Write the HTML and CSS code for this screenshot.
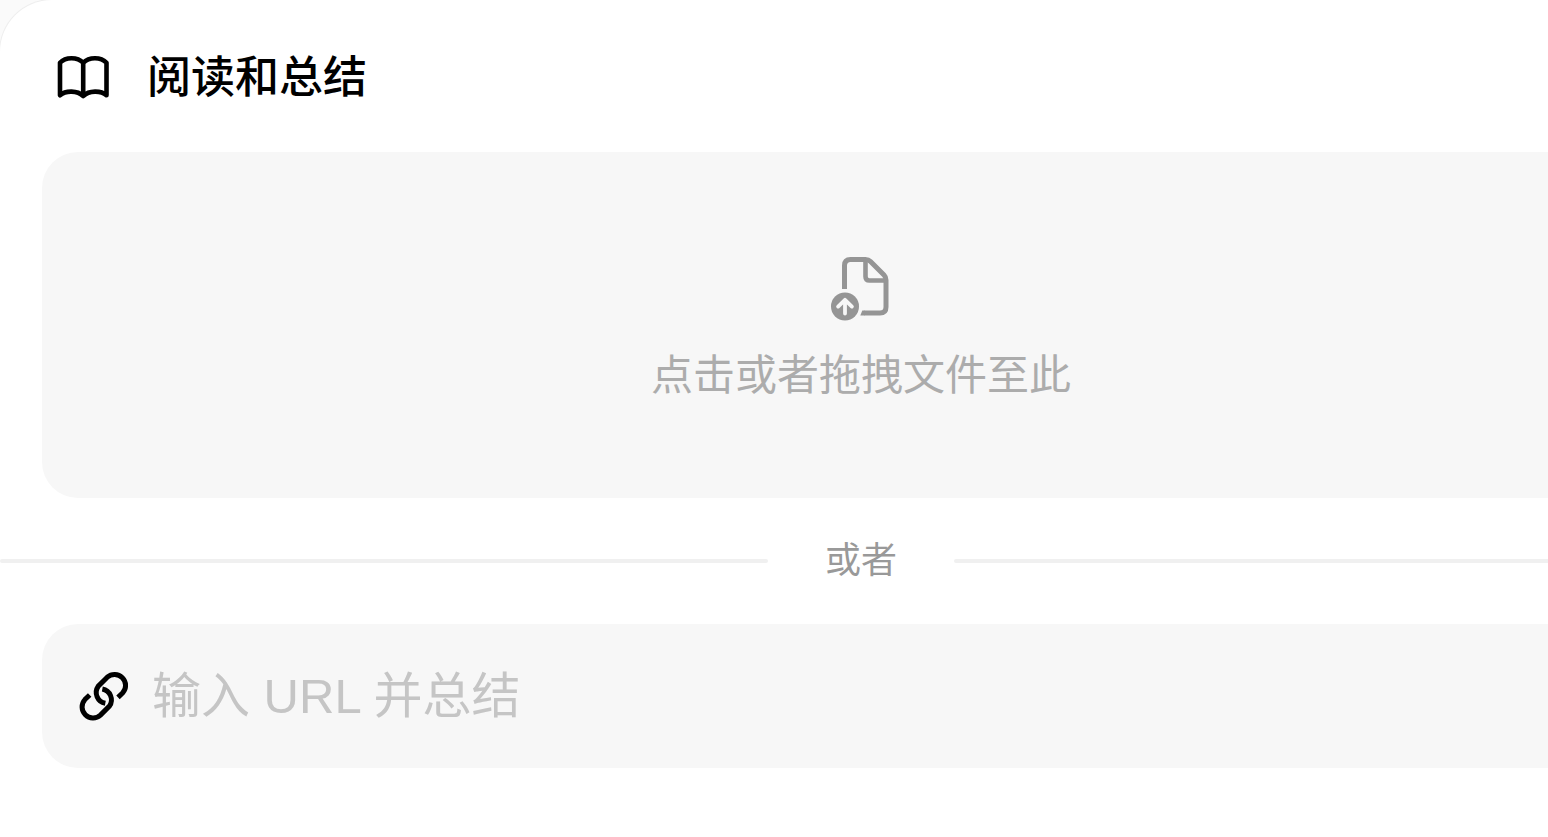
FILE: index.html
```html
<!DOCTYPE html>
<html lang="zh-CN">
<head>
<meta charset="utf-8">
<meta name="viewport" content="width=device-width, initial-scale=1">
<title>阅读和总结</title>
<link rel="stylesheet" href="styles.css">
</head>
<body>
<main class="panel">
  <header class="panel-header">
    <svg class="icon-book" viewBox="56 54 54 46" aria-hidden="true">
      <path d="M60 95.300V62.800C65.500 56.700 77.500 56.700 83.200 62.800C89 56.700 101 56.700 106.500 62.800V95.300C101 90.300 89 90.300 83.200 96C77.500 90.300 65.500 90.300 60 95.300ZM83.200 62.800V96" fill="none" stroke="currentColor" stroke-width="4.600" stroke-linejoin="round" stroke-linecap="round"/>
    </svg>
    <h1 class="title">阅读和总结</h1>
  </header>

  <button class="dropzone" type="button">
    <svg class="icon-file" viewBox="0 0 60 66" aria-hidden="true">
      <g fill="none" stroke="currentColor" stroke-width="5">
        <path d="M13.500 33V9.500Q13.500 3.500 19.500 3.500H34.500Q37.500 3.500 39.500 5.500L53 19Q55 21 55 24V51Q55 57 49 57H33"/>
        <path d="M34.500 4V20.500Q34.500 24.500 38.500 24.500H54.500" stroke-width="4.600"/>
      </g>
      <path d="M33.500 54.500H31.300L29.300 59.500H33.500Z" fill="currentColor"/>
      <circle cx="14" cy="50.500" r="14" fill="currentColor"/>
      <path d="M14 57.500V44M7.100 50.600L14 43.800L20.900 50.600" fill="none" stroke="#f7f7f7" stroke-width="3.800" stroke-linecap="round" stroke-linejoin="round"/>
    </svg>
    <span class="drop-text">点击或者拖拽文件至此</span>
  </button>

  <div class="divider"><span>或者</span></div>

  <div class="url-box">
    <label class="url-label" for="url" aria-label="URL">
      <svg class="icon-link" viewBox="57 48 150 150" aria-hidden="true">
        <g fill="none" stroke="currentColor" stroke-width="15">
          <path d="M174 127L188.300 113.300A33 33 0 0 0 141.700 66.700L114.700 93.700A33 33 0 0 0 136 145"/>
          <path d="M89 120L74.700 133.700A33 33 0 0 0 121.300 180.300L148.300 153.300A33 33 0 0 0 127 102"/>
        </g>
      </svg>
    </label>
    <input class="url-input" id="url" type="text" placeholder="输入 URL 并总结">
  </div>
</main>
</body>
</html>
```
FILE: styles.css
```css
* {
  box-sizing: border-box;
}

body {
  margin: 0;
  min-height: 100vh;
  overflow: hidden;
  background: #fafafa;
  font-family: "Liberation Sans", "Noto Sans CJK SC", sans-serif;
}

.panel {
  min-height: 100vh;
  margin-right: -174px;
  padding-top: 42px;
  border-radius: 52px 0 0 0;
  background: #fff;
  box-shadow: 0 0 0 1px #eee;
}

.panel-header {
  display: flex;
  align-items: center;
  gap: 37px;
  height: 70px;
  padding-left: 56px;
}

.title {
  margin: 0;
  padding-top: 2px;
  font-size: 44px;
  font-weight: 500;
  line-height: 64px;
}

.icon-book {
  width: 54px;
  height: 46px;
}

.dropzone {
  display: flex;
  flex-direction: column;
  align-items: center;
  justify-content: center;
  gap: 22px;
  width: calc(100% - 84px);
  min-height: 346px;
  margin: 40px 42px 0;
  padding: 13px 0 0;
  border: 0;
  border-radius: 36px;
  background: #f7f7f7;
  color: #959595;
  font: inherit;
  cursor: pointer;
}

.icon-file {
  width: 60px;
  height: 66px;
}

.drop-text {
  color: #acacac;
  font-size: 42px;
  line-height: 64px;
}

.divider {
  display: flex;
  align-items: center;
  gap: 57px;
  height: 126px;
  color: #999;
  font-size: 36px;
  line-height: 48px;
}

.divider::before,
.divider::after {
  content: "";
  flex: 1;
  height: 4px;
  border-radius: 2px;
  background: #f0f0f0;
}

.url-box {
  display: flex;
  align-items: center;
  gap: 23px;
  height: 144px;
  margin: 0 42px;
  padding: 0 37px;
  border-radius: 36px;
  background: #f7f7f7;
}

.url-label {
  display: flex;
}

.icon-link {
  width: 50px;
  height: 50px;
}

.url-input {
  flex: 1;
  min-width: 0;
  height: 70px;
  padding: 0;
  border: 0;
  outline: 0;
  background: transparent;
  color: #000;
  font: inherit;
  font-size: 49px;
}

.url-input::placeholder {
  color: #c5c5c5;
  opacity: 1;
}
```
